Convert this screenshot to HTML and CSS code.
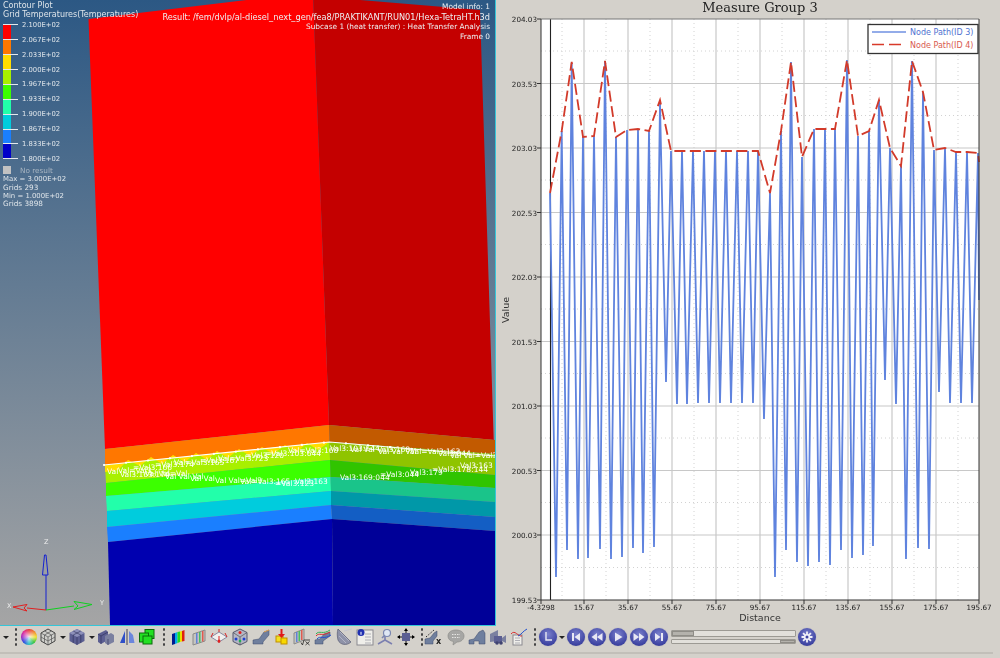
FILE: index.html
```html
<!DOCTYPE html>
<html lang="en">
<head>
<meta charset="utf-8">
<title>Measure Group 3</title>
<link rel="stylesheet" href="styles.css">
</head>
<body>
<div class="app">
  <main class="panes">
    <section class="viewport">
      <svg class="model" viewBox="0 0 495 625" width="495" height="625">
        <polygon fill="#ff0000" points="88.5,19 313,-8 329,425 105,449"/>
        <polygon fill="#ff7700" points="105,449 329,425 329.5,442 105,465"/>
        <polygon fill="#a8f000" points="105,465 329.5,442 330,460 106,483"/>
        <polygon fill="#ffdd00" points="105,465 329.5,442 318,450 307,443 297,452 285,445 273,454 262,447 250,456 239,449 228,458 217,451 207,460 196,453 185,462 173,455 162,464 151,457 140,466 128,460 118,470 105,472"/>
        <polygon fill="#3cff00" points="106,483 330,460 330.5,477 106,496"/>
        <polygon fill="#22ffaa" points="106,496 330.5,477 331,491 107,511"/>
        <polygon fill="#00ccdd" points="107,511 331,491 331,505 107,527"/>
        <polygon fill="#1a7fff" points="107,527 331,505 332,519 108,542"/>
        <polygon fill="#0000b0" points="108,542 332,519 333,625 110,625"/>
        <polygon fill="#c40000" points="313,-8 360,0 480,10 495,480 495,440 329,425"/>
        <polygon fill="#c25a00" points="329,425 495,440 495,454 329.5,442"/>
        <polygon fill="#8fc400" points="329.5,442 495,454 495,475 330,460"/>
        <polygon fill="#30c400" points="330,460 495,475 495,488 330.5,477"/>
        <polygon fill="#1ac48a" points="330.5,477 495,488 495,502 331,491"/>
        <polygon fill="#0098a8" points="331,491 495,502 495,517 331,505"/>
        <polygon fill="#135ec4" points="331,505 495,517 495,531 332,519"/>
        <polygon fill="#000098" points="332,519 495,531 495,625 333,625"/>
        <polyline class="iso" points="104,465 329.5,442 495,456"/>
        <polyline class="iso-dots" points="104,465 329.5,442 495,456"/>
        <g class="probe">
          <text x="107" y="474">Val</text><text x="118" y="473">Val=Val3</text><text x="133" y="470">=Val3:166</text>
          <text x="155" y="467">=Val3:174</text><text x="174" y="465">Val=Val3:165</text><text x="200" y="463">=Val3:167</text>
          <text x="218" y="461">Val=Val3:723</text><text x="245" y="458">=Val3:120</text><text x="265" y="456">=Val3:103:644</text>
          <text x="288" y="453">Val=Val3:160</text><text x="330" y="451">Val3:103:644</text><text x="350" y="452">Val Val Val3:168</text>
          <text x="378" y="454">Val Val Val</text><text x="410" y="454">Val=Val3:163</text><text x="438" y="456">Val3:044</text>
          <text x="450" y="458">Val Val=Val3</text><text x="120" y="477">Val3:163:174</text><text x="145" y="476">Val Val=Val</text>
          <text x="165" y="479">Val Val Val</text><text x="190" y="481">Val Val</text><text x="215" y="483">Val Val=Val3</text>
          <text x="240" y="484">Val=Val3:165</text><text x="275" y="486">=Val3:123</text><text x="295" y="484">Val3:163</text>
          <text x="340" y="480">Val3:169:044</text><text x="380" y="477">=Val3:044</text><text x="410" y="475">Val3:179</text>
          <text x="432" y="472">=Val3:178:144</text><text x="460" y="468">Val3:163</text>
        </g>
        <g class="triad">
          <path class="ax-z" d="M46 610V575M44.500 555L42.500 575H48L46 555Z"/>
          <path class="ax-y" d="M46 610L74 606M92 604.500L74 601.500L78 606L74 609.500Z"/>
          <path class="ax-x" d="M46 610L27 608M13 607L27 604.500L24 608L27 611Z"/>
          <text x="44" y="544">Z</text><text x="7" y="608">X</text><text x="100" y="605">Y</text>
        </g>
      </svg>
      <div class="legend">
        <div class="legend-title">Contour Plot</div>
        <div class="legend-title">Grid Temperatures(Temperatures)</div>
        <div class="scale">
          <div class="bars">
            <i class="b1"></i><i class="b2"></i><i class="b3"></i><i class="b4"></i><i class="b5"></i><i class="b6"></i><i class="b7"></i><i class="b8"></i><i class="b9"></i>
          </div>
          <ul class="ticks">
            <li><span>2.100E+02</span></li><li><span>2.067E+02</span></li><li><span>2.033E+02</span></li><li><span>2.000E+02</span></li><li><span>1.967E+02</span></li><li><span>1.933E+02</span></li><li><span>1.900E+02</span></li><li><span>1.867E+02</span></li><li><span>1.833E+02</span></li><li><span>1.800E+02</span></li>
          </ul>
        </div>
        <div class="no-result"><i></i><span>No result</span></div>
        <div class="stat stat-num">Max = 3.000E+02</div>
        <div class="stat">Grids 293</div>
        <div class="stat stat-num">Min = 1.000E+02</div>
        <div class="stat">Grids 3898</div>
      </div>
      <div class="info">
        <div>Model info: 1</div>
        <div class="info-path">Result: /fem/dvlp/al-diesel_next_gen/fea8/PRAKTIKANT/RUN01/Hexa-TetraHT.h3d</div>
        <div>Subcase 1 (heat transfer) : Heat Transfer Analysis</div>
        <div>Frame 0</div>
      </div>
    </section>
    <section class="plot-pane">
      <svg class="chart" viewBox="496 0 504 625" width="504" height="625">
        <rect class="plot-bg" x="541" y="19" width="438" height="581"/>
        <path class="minor" d="M562 19V600M606 19V600M650 19V600M694 19V600M738 19V600M782 19V600M826 19V600M870 19V600M914 19V600M958 19V600M541 51H979M541 115.500H979M541 180H979M541 244.500H979M541 309H979M541 373.500H979M541 438H979M541 502.500H979M541 567.500H979"/>
        <path class="major" d="M584 19V600M628 19V600M672 19V600M716 19V600M760 19V600M804 19V600M848 19V600M892 19V600M936 19V600M541 83.500H979M541 148H979M541 212.500H979M541 277H979M541 341.500H979M541 406H979M541 470.500H979M541 535H979"/>
        <path class="zero" d="M550.500 19V600"/>
        <polyline class="s-blue" points="550,193 556,577 561.700,131 567,550 571.700,63 578,559 583,137 588,558 594,136 600,549 605,61 611,559 616,137 622,557 627,130 633,548 638,129 643,553 649,131 654,547 660,103 666,382 671,151 677,404 682,151 687,404 693,151 698,403 704,151 709,403 715,151 720,403 726,151 731,403 737,151 742,403 748,151 753,403 758,151 764,419 770,193 775,577 781,131 786,550 791,62 797,562 802,157 808,566 814,129 819,562 825,129 830,565 835,129 841,550 847,60 852,558 858,136 863,555 869,131 873,546 879,100 885,380 890,148 896,404 901,166 906,559 912,61 918,548 923,92 929,549 934,150 939,392 945,148 950,403 956,152 961,403 967,152 972,403 978,153 979,300"/>
        <polyline class="s-red" points="550,193 561.700,131 571.700,62 583,137 594,136 605,61 616,137 627,130 638,129 649,131 660,100 671,151 682,151 693,151 704,151 715,151 726,151 737,151 748,151 758,151 770,193 781,131 791,62 802,157 814,129 825,129 835,129 847,60 858,136 869,131 879,100 890,148 901,166 912,61 923,92 934,150 945,148 956,152 967,152 978,153 979,162"/>
        <path class="frame-soft" d="M541 19H979"/>
        <path class="frame" d="M541 19V600H979V19M537 19H541M537 83.500H541M537 148H541M537 212.500H541M537 277H541M537 341.500H541M537 406H541M537 470.500H541M537 535H541M537 600H541M541 600V604M584 600V604M628 600V604M672 600V604M716 600V604M760 600V604M804 600V604M848 600V604M892 600V604M936 600V604M979 600V604"/>
        <g class="y-labels">
          <text x="537" y="22">204.03</text><text x="537" y="87">203.53</text><text x="537" y="151">203.03</text><text x="537" y="216">202.53</text><text x="537" y="280">202.03</text><text x="537" y="345">201.53</text><text x="537" y="409">201.03</text><text x="537" y="474">200.53</text><text x="537" y="538">200.03</text><text x="537" y="603">199.53</text>
        </g>
        <g class="x-labels">
          <text x="541" y="610">-4.3298</text><text x="584" y="610">15.67</text><text x="628" y="610">35.67</text><text x="672" y="610">55.67</text><text x="716" y="610">75.67</text><text x="760" y="610">95.67</text><text x="804" y="610">115.67</text><text x="848" y="610">135.67</text><text x="892" y="610">155.67</text><text x="936" y="610">175.67</text><text x="979" y="610">195.67</text>
        </g>
        <text class="chart-title" x="760" y="12">Measure Group 3</text>
        <text class="axis-name" x="760" y="621">Distance</text>
        <text class="axis-name" transform="translate(509 310) rotate(-90)">Value</text>
        <rect class="key" x="868" y="24.500" width="110" height="29"/>
        <path class="key-blue" d="M872 32H906"/>
        <path class="key-red" d="M872 44.500H906"/>
        <text class="key-t1" x="910" y="35">Node Path(ID 3)</text>
        <text class="key-t2" x="910" y="47.500">Node Path(ID 4)</text>
      </svg>
    </section>
  </main>
  <nav class="toolbar">
    <div class="group"><b class="arrow"></b></div>
    <div class="group g1">
      <i class="grip"></i>
      <i class="wheel"></i>
      <svg class="tool" viewBox="0 0 18 18"><path class="wire" d="M9 1L16 5V13L9 17L2 13V5Z"/><path class="wire-l" d="M9 9L2 5M9 9L16 5M9 9V17M5.500 3L12.500 7V15M12.500 3L5.500 7V15M2 9L9 13L16 9"/></svg>
      <b class="arrow"></b>
      <svg class="tool" viewBox="0 0 18 18"><path class="solid" d="M9 1L16.500 5V13L9 17L1.500 13V5Z"/><path class="solid-top" d="M9 1L16.500 5L9 9L1.500 5Z"/><path class="solid-l" d="M9 9V17M5.200 3L12.800 7M12.800 3L5.200 7M5.200 7V15M12.800 7V15"/></svg>
      <b class="arrow"></b>
      <svg class="tool" viewBox="0 0 18 18"><path class="solid" d="M1 6L9 2L11 4V12L4 16L1 14Z"/><path class="parts" d="M8 8L14 5L17 7V14L11 17L8 15Z"/><path class="solid-l" d="M4 8V16M11 11V17M1 6L4 8L11 4"/></svg>
      <svg class="tool" viewBox="0 0 18 18"><path class="mir-a" d="M7 3V15H2Z"/><path class="mir-b" d="M11 3V15H16.500L15 7Z"/><path class="mir-l" d="M9 1V17"/></svg>
      <svg class="tool" viewBox="0 0 18 18"><rect class="sq" x="7" y="1.500" width="9" height="9"/><rect class="sq" x="1.500" y="5" width="9" height="9"/><rect class="sq" x="5" y="8" width="9" height="8"/></svg>
    </div>
    <div class="group g2">
      <i class="grip"></i>
      <svg class="tool" viewBox="0 0 18 18"><path fill="#001a90" d="M3 6L6 5V16L3 17Z"/><path fill="#00aaee" d="M6 5L8.500 4V15L6 16Z"/><path fill="#22dd22" d="M8.500 4L11 3.500V14L8.500 15Z"/><path fill="#eedd00" d="M11 3.500L13 3V13.500L11 14Z"/><path fill="#e02010" d="M13 3L15.500 2V13L13 13.500Z"/></svg>
      <svg class="tool" viewBox="0 0 18 18"><path fill="#c4c4c0" stroke="#8a8a8a" d="M3 6L15 2V13L3 17Z"/><path fill="#e05a50" d="M12 3H13.500V13.500H12Z"/><path fill="#48c060" d="M9 4H10.500V14.500H9Z"/><path fill="#6080d8" d="M6 5H7.500V15.500H6Z"/></svg>
      <svg class="tool" viewBox="0 0 18 18"><path class="pale" d="M1 9L9 4L17 9L9 14Z"/><path class="red" d="M9 8V15M1 9L3 5M17 9L15 5M9 4V1"/><circle fill="#e02020" cx="9" cy="13" r="1.500"/></svg>
      <svg class="tool" viewBox="0 0 18 18"><path class="hex" d="M9 1L16 4.500V13.500L9 17L2 13.500V4.500Z"/><path class="wire-l" d="M9 9L2 4.500M9 9L16 4.500M9 9V17"/><circle fill="#e02020" cx="9" cy="4.500" r="1.500"/><circle fill="#2040d0" cx="5" cy="11" r="1.500"/><circle fill="#2040d0" cx="13" cy="11" r="1.500"/><circle fill="#20b050" cx="9" cy="13" r="1.300"/></svg>
      <svg class="tool" viewBox="0 0 18 18"><path class="ramp" d="M1 16L1 12L7 11L12 4L17 2V7L11 14V16Z"/><path class="ramp-l" d="M12 4L17 2"/></svg>
      <svg class="tool" viewBox="0 0 18 18"><rect fill="#f4e020" stroke="#c09000" x="3" y="8" width="7" height="6"/><rect fill="#f8d800" stroke="#c09000" x="8" y="10" width="6" height="6"/><path fill="#e01818" d="M7.500 1H9.500V6H12L8.500 10L5 6H7.500Z"/></svg>
      <svg class="tool" viewBox="0 0 18 18"><path fill="#c4c4c0" stroke="#8a8a8a" d="M1 5L11 1V12L1 16Z"/><path fill="#e05a50" d="M8 2H9.500V12H8Z"/><path fill="#48c060" d="M5.500 3H7V13H5.500Z"/><path fill="#6080d8" d="M3 4H4.500V14H3Z"/><path class="root" d="M8 14.500L9.500 17L11 12H17"/><path class="root" d="M12.500 13.500L16.500 17M16.500 13.500L12.500 17"/></svg>
      <svg class="tool" viewBox="0 0 18 18"><path class="ramp" d="M1 16V12L6 11L10 6L16 4V8L9 13V16Z"/><path class="ln-r" d="M2 8C5 4 8 9 16 4"/><path class="ln-g" d="M2 6C5 2 9 7 16 2"/><path class="ln-b" d="M3 11C6 7 10 12 17 7"/></svg>
      <svg class="tool" viewBox="0 0 18 18"><path class="dish" d="M3 1L16 14C12 18 5 17 3 12C2 8 2 4 3 1Z"/><path class="dish-l" d="M5 4L14 13M4 8L11 15M9 3L17 1"/></svg>
      <svg class="tool" viewBox="0 0 18 18"><rect class="win" x="1" y="2" width="16" height="15"/><path class="win-l" d="M9 6H15M9 9H15M9 12H15M9 15H15M2 6H8"/><circle fill="#2030b0" cx="5" cy="4.500" r="3.500"/><rect fill="#ffffff" x="4.500" y="3.800" width="1" height="3"/></svg>
      <svg class="tool" viewBox="0 0 18 18"><path class="yshape" d="M9 8V12L2 16M9 12L16 16"/><circle class="lens" cx="11" cy="5" r="3.500"/><path class="handle" d="M8.500 7.500L6 10"/></svg>
      <svg class="tool" viewBox="0 0 18 18"><rect class="mv" x="5" y="5" width="8" height="8"/><path class="mv-l" d="M1 9H5M13 9H17M9 1V5M9 13V17"/><path d="M0 9L3 7V11ZM18 9L15 7V11ZM9 0L7 3H11ZM9 18L7 15H11Z"/></svg>
    </div>
    <div class="group g3a">
      <i class="grip"></i>
      <svg class="tool" viewBox="0 0 18 18"><path class="ramp" d="M1 16V11L6 10L10 5L13 3V8L9 13V16Z"/><path class="dashes" d="M2 9L10 2"/><text class="mark" x="12" y="16">x</text></svg>
    </div>
    <div class="group g3">
      <svg class="tool" viewBox="0 0 18 18"><path class="bubble" d="M9 2C14 2 17 4.500 17 8S14 14 10 14L6 17L6.500 13.500C3 13 1 11 1 8C1 4.500 4 2 9 2Z"/><path class="bubble-l" d="M5 6.500H13M5 9.500H13"/></svg>
      <svg class="tool" viewBox="0 0 18 18"><path class="ramp" d="M1 16V12L6 11L11 4L15 2L17 5V16H11V13H6V16Z"/></svg>
      <svg class="tool" viewBox="0 0 18 18"><path class="parts" d="M1 6L9 2V13L1 14Z"/><path class="solid" d="M5 8H13V15H5Z"/><path class="parts" d="M13 10L17 7V15L13 13Z"/><circle class="lens-d" cx="8" cy="15" r="1.800"/><circle class="lens-d" cx="12" cy="15" r="1.800"/></svg>
      <svg class="tool" viewBox="0 0 18 18"><rect class="win" x="3" y="7" width="9" height="10"/><path class="win-l" d="M5 10H10M5 12.500H10M5 15H10"/><path class="ln-r" d="M1 6C5 1 8 9 12 8"/><path class="ln-b" d="M8 8C11 7 13 3 17 1"/></svg>
    </div>
    <div class="group g4">
      <i class="grip"></i>
      <span class="disc"><svg viewBox="0 0 18 18"><path class="glyph-l" d="M7 4V12H13"/></svg></span>
      <b class="arrow"></b>
    </div>
    <div class="group g5">
      <span class="disc"><svg viewBox="0 0 18 18"><path class="glyph" d="M5 5H7V13H5ZM13 5V13L7.500 9Z"/></svg></span>
      <span class="disc"><svg viewBox="0 0 18 18"><path class="glyph" d="M9 5V13L3.500 9ZM14.500 5V13L9 9Z"/></svg></span>
      <span class="disc"><svg viewBox="0 0 18 18"><path class="glyph" d="M6 4.500V13.500L13.500 9Z"/></svg></span>
      <span class="disc"><svg viewBox="0 0 18 18"><path class="glyph" d="M3.500 5V13L9 9ZM9 5V13L14.500 9Z"/></svg></span>
      <span class="disc"><svg viewBox="0 0 18 18"><path class="glyph" d="M5 5V13L10.500 9ZM11 5H13V13H11Z"/></svg></span>
    </div>
    <div class="sliders">
      <div class="track"><i class="thumb thumb-a"></i></div>
      <div class="track track-b"><i class="thumb thumb-b"></i></div>
    </div>
    <span class="disc gear"><svg viewBox="0 0 18 18"><path class="cog-t" d="M9 3.500V14.500M3.500 9H14.500M5.100 5.100L12.900 12.900M12.900 5.100L5.100 12.900"/><circle class="cog" cx="9" cy="9" r="3"/><circle class="cog-hole" cx="9" cy="9" r="1.500"/></svg></span>
  </nav>
  <div class="rule"></div>
</div>
</body>
</html>
```

FILE: styles.css
```css
* { box-sizing: border-box; }
html, body { margin: 0; padding: 0; }
body {
  width: 1000px;
  height: 658px;
  overflow: hidden;
  background: #d4d1cb;
  font-family: "DejaVu Sans", sans-serif;
}
.app { display: flex; flex-direction: column; height: 658px; }
.panes { display: flex; height: 626px; }

/* 3D viewport */
.viewport {
  position: relative;
  width: 496px;
  height: 626px;
  border-right: 1px solid #35c6d8;
  border-bottom: 1px solid #35c6d8;
  background: linear-gradient(180deg, #2c5884 0%, #a5a5a5 100%);
  overflow: hidden;
}
.model { display: block; filter: blur(0.3px); }
.iso { fill: none; stroke: #ffffff; stroke-width: 1.2; }
.iso-dots { fill: none; stroke: #ffffff; stroke-width: 2.2; stroke-linecap: round; stroke-dasharray: 0.1 22; }
.probe text { font-family: "DejaVu Sans", sans-serif; font-size: 7.5px; fill: #ffffff; }
.triad text { font-family: "DejaVu Sans", sans-serif; font-size: 6.5px; fill: #eeeeee; }
.ax-z { fill: none; stroke: #1420d0; stroke-width: 1; }
.ax-y { fill: none; stroke: #10d020; stroke-width: 1; }
.ax-x { fill: none; stroke: #e02020; stroke-width: 1; }

.legend {
  position: absolute;
  left: 3px;
  top: 1px;
  width: 160px;
  color: #dfe5ea;
  font-size: 7.3px;
  filter: blur(0.35px);
}
.legend-title { height: 9px; line-height: 9px; font-size: 8px; white-space: nowrap; }
.scale { display: grid; margin-top: -1.5px; font-size: 6.8px; }
.bars { grid-area: 1 / 1; display: flex; flex-direction: column; width: 8px; margin-top: 7.45px; }
.bars i { display: block; height: 14.89px; }
.b1 { background: #ff0000; }
.b2 { background: #ff7700; }
.b3 { background: #ffdd00; }
.b4 { background: #a8f000; }
.b5 { background: #3cff00; }
.b6 { background: #22ffaa; }
.b7 { background: #00ccdd; }
.b8 { background: #1a7fff; }
.b9 { background: #0000c8; }
.ticks { grid-area: 1 / 1; list-style: none; margin: 0; padding: 0; }
.ticks li { display: flex; align-items: center; height: 14.89px; gap: 4px; white-space: nowrap; }
.ticks li::before { content: ""; width: 15px; height: 1px; background: #e4e8ec; }
.no-result { display: flex; align-items: center; gap: 9px; height: 8px; color: #a9b6c2; }
.no-result i { width: 8px; height: 8px; background: #c2c2c2; }
.stat { height: 8.3px; line-height: 8.3px; white-space: nowrap; }
.stat-num { font-size: 6.9px; }
.no-result + .stat { margin-top: 1px; }

.info {
  position: absolute;
  right: 5px;
  top: 2px;
  color: #eef0f2;
  font-size: 7.4px;
  line-height: 10px;
  text-align: right;
  white-space: nowrap;
  filter: blur(0.35px);
}
.info-path { font-size: 8.2px; }

/* Chart */
.plot-pane { flex: 1; overflow: hidden; }
.chart { display: block; filter: blur(0.35px); }
.plot-bg { fill: #ffffff; }
.minor { fill: none; stroke: #d2d2d2; stroke-width: 1; stroke-dasharray: 1 3; }
.major { fill: none; stroke: #c8c8c8; stroke-width: 1.2; }
.zero { fill: none; stroke: #222222; stroke-width: 1.1; }
.s-blue { fill: none; stroke: #5f83de; stroke-width: 1.8; stroke-linejoin: bevel; }
.s-red { fill: none; stroke: #d23a2a; stroke-width: 1.8; stroke-dasharray: 11 4.5; }
.frame { fill: none; stroke: #333333; stroke-width: 1; }
.frame-soft { fill: none; stroke: #777777; stroke-width: 1; }
.y-labels text { font-family: "DejaVu Sans", sans-serif; font-size: 7.2px; text-anchor: end; fill: #222222; }
.x-labels text { font-family: "DejaVu Sans", sans-serif; font-size: 7.2px; text-anchor: middle; fill: #222222; }
.chart-title { font-family: "DejaVu Serif", serif; font-size: 13px; text-anchor: middle; fill: #222222; }
.axis-name { font-family: "DejaVu Sans", sans-serif; font-size: 9.5px; text-anchor: middle; fill: #333333; }
.key { fill: #ffffff; stroke: #333333; stroke-width: 1.3; }
.key-blue { fill: none; stroke: #6f90e2; stroke-width: 1.6; }
.key-red { fill: none; stroke: #d83a2a; stroke-width: 1.6; stroke-dasharray: 12 5; }
.key-t1, .key-t2 { font-family: "DejaVu Sans", sans-serif; font-size: 8px; }
.key-t1 { fill: #4f72d0; }
.key-t2 { fill: #d85a50; }

/* Toolbar */
.toolbar { display: flex; align-items: center; height: 22px; padding-left: 3px; }
.group { display: flex; align-items: center; gap: 2.5px; }
.g1 { margin-left: 5px; }
.g2 { margin-left: 6px; gap: 2.75px; }
.g3a { margin-left: 5.25px; gap: 0; }
.g3 { margin-left: 5px; gap: 2.75px; }
.g4 { margin-left: 5.75px; gap: 2px; }
.g5 { margin-left: 2px; gap: 2.75px; }
.tool { display: block; width: 18px; height: 18px; flex: none; filter: blur(0.3px); }
.arrow { display: block; width: 6px; height: 3px; border-left: 3px solid transparent; border-right: 3px solid transparent; border-top: 3px solid #222222; flex: none; }
.grip {
  display: block;
  width: 4px;
  height: 20px;
  flex: none;
  background: radial-gradient(circle, #444444 1px, transparent 1.4px) 0 0 / 4px 5px;
}
.wheel {
  display: block;
  width: 16px;
  height: 16px;
  border-radius: 50%;
  flex: none;
  background: radial-gradient(circle, rgba(255,255,255,.85) 0, rgba(255,255,255,0) 70%), conic-gradient(#e83030, #f08020, #f0e020, #30c030, #20c0c0, #2040e0, #a020c0, #e02090, #e83030);
}
.wire { fill: #cfcfcb; stroke: #444444; stroke-width: 1; }
.wire-l { fill: none; stroke: #555555; stroke-width: .7; }
.solid { fill: #5c5f92; }
.solid-top { fill: #8d90ba; }
.solid-l { fill: none; stroke: #2c2e58; stroke-width: .6; }
.parts { fill: #7b80a0; }
.mir-a { fill: #2f4fc8; }
.mir-b { fill: #6c86dc; }
.mir-l { fill: none; stroke: #445; stroke-width: 1; }
.sq { fill: #22e022; stroke: #0b6a0b; stroke-width: 1; }
.pale { fill: #f0f0ee; stroke: #8888a0; stroke-width: 1; }
.red { fill: none; stroke: #d82020; stroke-width: 1; }
.hex { fill: #b4b6c4; stroke: #55576e; stroke-width: 1; }
.ramp { fill: #6f7f9e; stroke: #3f4a68; stroke-width: .5; }
.ramp-l { fill: none; stroke: #e0a050; stroke-width: 1; }
.root { fill: none; stroke: #222222; stroke-width: .8; }
.ln-r { fill: none; stroke: #d83030; stroke-width: 1; }
.ln-g { fill: none; stroke: #30b050; stroke-width: 1; }
.ln-b { fill: none; stroke: #2050d0; stroke-width: 1; }
.dish { fill: #8e92a8; stroke: #5a5d74; stroke-width: .7; }
.dish-l { fill: none; stroke: #c0c2d0; stroke-width: .7; }
.win { fill: #efeeea; stroke: #8a8a90; stroke-width: 1; }
.win-l { fill: none; stroke: #a0a0a8; stroke-width: .8; }
.yshape { fill: none; stroke: #7b7fb0; stroke-width: 1.6; }
.lens { fill: #dfe7f4; stroke: #7a86b0; stroke-width: 1.2; }
.handle { fill: none; stroke: #7a86b0; stroke-width: 1.6; }
.mv { fill: #5c5f92; }
.mv-l { fill: none; stroke: #111111; stroke-width: 1; }
.dashes { fill: none; stroke: #222222; stroke-width: 1; stroke-dasharray: 1.5 1.5; }
.mark { font-family: "DejaVu Sans", sans-serif; font-size: 8px; font-weight: bold; fill: #222222; }
.bubble { fill: #a6a6a4; stroke: #8c8c8a; stroke-width: .7; }
.bubble-l { fill: none; stroke: #e4e4e2; stroke-width: 1; stroke-dasharray: 1.5 1; }
.lens-d { fill: #3f4270; }

.disc {
  display: block;
  width: 18px;
  height: 18px;
  flex: none;
  border-radius: 50%;
  background: radial-gradient(circle at 50% 35%, #7a80cc 0%, #3d43a2 70%, #2a2e80 100%);
  box-shadow: 0 0 1px #8a8ab0;
}
.disc svg { display: block; width: 18px; height: 18px; }
.glyph { fill: #e8e8f4; }
.glyph-l { fill: none; stroke: #e8e8f4; stroke-width: 1.4; }
.gear { margin-left: 2px; }
.cog { fill: #f0f0f8; }
.cog-t { fill: none; stroke: #f0f0f8; stroke-width: 1.8; }
.cog-hole { fill: #3d43a2; }

.sliders { display: flex; flex-direction: column; gap: 2px; width: 125px; margin-left: 3px; }
.track {
  height: 7px;
  background: #e2e0db;
  border: 1px solid #9c9a94;
  border-radius: 1px;
}
.track-b { height: 5px; display: flex; justify-content: flex-end; }
.thumb { display: block; background: #b4b2ac; border: 1px solid #8f8d87; }
.thumb-a { width: 22px; height: 5px; }
.thumb-b { width: 15px; height: 3px; }
.rule { width: 993px; height: 2px; margin-top: 4px; background: #c2bfb9; }
```
